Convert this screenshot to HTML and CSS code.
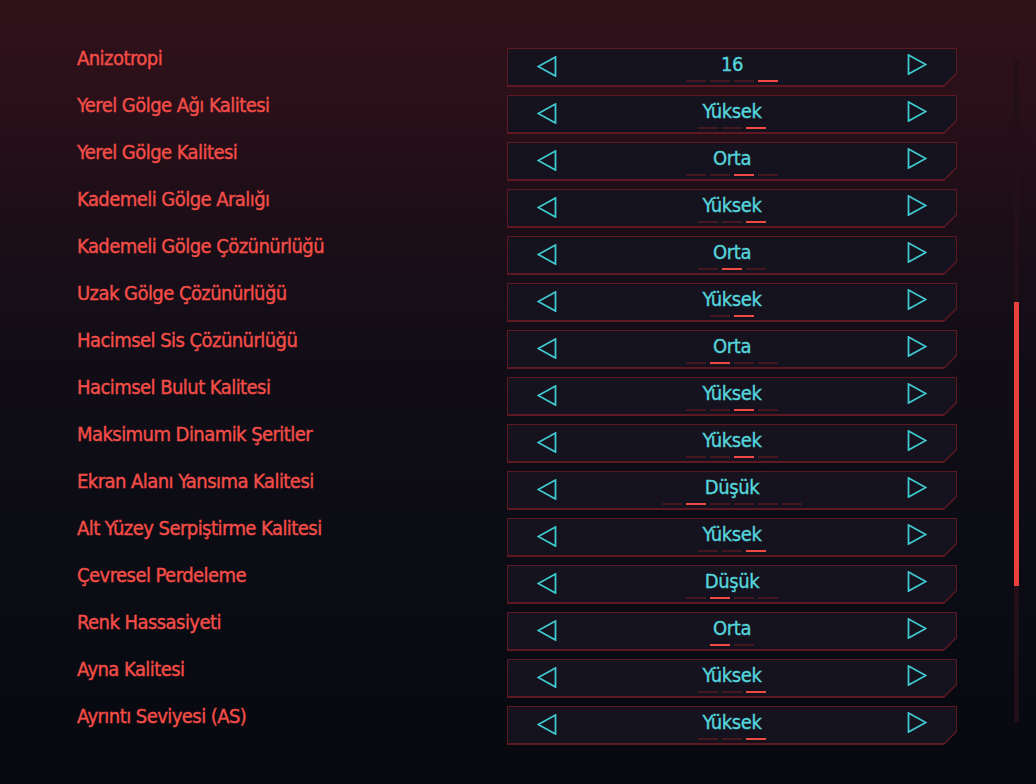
FILE: index.html
```html
<!DOCTYPE html>
<html lang="tr">
<head>
<meta charset="utf-8">
<title>Grafik Ayarları</title>
<link rel="stylesheet" href="styles.css">
</head>
<body>
<div class="page">
  <div class="list">
    <div class="row"><div class="label">Anizotropi</div><div class="sel"><div class="sel-in"><svg class="arr" viewBox="0 0 20 21"><polygon points="18.5,1 1.2,10.5 18.5,20"/></svg><div class="val"><span class="txt">16</span><div class="dots"><i></i><i></i><i></i><i class="on"></i></div></div><svg class="arr arr-r" viewBox="0 0 20 21"><polygon points="1.5,1 18.8,10.5 1.5,20"/></svg></div></div></div>
    <div class="row"><div class="label">Yerel Gölge Ağı Kalitesi</div><div class="sel"><div class="sel-in"><svg class="arr" viewBox="0 0 20 21"><polygon points="18.5,1 1.2,10.5 18.5,20"/></svg><div class="val"><span class="txt">Yüksek</span><div class="dots"><i></i><i></i><i class="on"></i></div></div><svg class="arr arr-r" viewBox="0 0 20 21"><polygon points="1.5,1 18.8,10.5 1.5,20"/></svg></div></div></div>
    <div class="row"><div class="label">Yerel Gölge Kalitesi</div><div class="sel"><div class="sel-in"><svg class="arr" viewBox="0 0 20 21"><polygon points="18.5,1 1.2,10.5 18.5,20"/></svg><div class="val"><span class="txt">Orta</span><div class="dots"><i></i><i></i><i class="on"></i><i></i></div></div><svg class="arr arr-r" viewBox="0 0 20 21"><polygon points="1.5,1 18.8,10.5 1.5,20"/></svg></div></div></div>
    <div class="row"><div class="label">Kademeli Gölge Aralığı</div><div class="sel"><div class="sel-in"><svg class="arr" viewBox="0 0 20 21"><polygon points="18.5,1 1.2,10.5 18.5,20"/></svg><div class="val"><span class="txt">Yüksek</span><div class="dots"><i></i><i></i><i class="on"></i></div></div><svg class="arr arr-r" viewBox="0 0 20 21"><polygon points="1.5,1 18.8,10.5 1.5,20"/></svg></div></div></div>
    <div class="row"><div class="label">Kademeli Gölge Çözünürlüğü</div><div class="sel"><div class="sel-in"><svg class="arr" viewBox="0 0 20 21"><polygon points="18.5,1 1.2,10.5 18.5,20"/></svg><div class="val"><span class="txt">Orta</span><div class="dots"><i></i><i class="on"></i><i></i></div></div><svg class="arr arr-r" viewBox="0 0 20 21"><polygon points="1.5,1 18.8,10.5 1.5,20"/></svg></div></div></div>
    <div class="row"><div class="label">Uzak Gölge Çözünürlüğü</div><div class="sel"><div class="sel-in"><svg class="arr" viewBox="0 0 20 21"><polygon points="18.5,1 1.2,10.5 18.5,20"/></svg><div class="val"><span class="txt">Yüksek</span><div class="dots"><i></i><i class="on"></i></div></div><svg class="arr arr-r" viewBox="0 0 20 21"><polygon points="1.5,1 18.8,10.5 1.5,20"/></svg></div></div></div>
    <div class="row"><div class="label">Hacimsel Sis Çözünürlüğü</div><div class="sel"><div class="sel-in"><svg class="arr" viewBox="0 0 20 21"><polygon points="18.5,1 1.2,10.5 18.5,20"/></svg><div class="val"><span class="txt">Orta</span><div class="dots"><i></i><i class="on"></i><i></i><i></i></div></div><svg class="arr arr-r" viewBox="0 0 20 21"><polygon points="1.5,1 18.8,10.5 1.5,20"/></svg></div></div></div>
    <div class="row"><div class="label">Hacimsel Bulut Kalitesi</div><div class="sel"><div class="sel-in"><svg class="arr" viewBox="0 0 20 21"><polygon points="18.5,1 1.2,10.5 18.5,20"/></svg><div class="val"><span class="txt">Yüksek</span><div class="dots"><i></i><i></i><i class="on"></i><i></i></div></div><svg class="arr arr-r" viewBox="0 0 20 21"><polygon points="1.5,1 18.8,10.5 1.5,20"/></svg></div></div></div>
    <div class="row"><div class="label">Maksimum Dinamik Şeritler</div><div class="sel"><div class="sel-in"><svg class="arr" viewBox="0 0 20 21"><polygon points="18.5,1 1.2,10.5 18.5,20"/></svg><div class="val"><span class="txt">Yüksek</span><div class="dots"><i></i><i></i><i class="on"></i><i></i></div></div><svg class="arr arr-r" viewBox="0 0 20 21"><polygon points="1.5,1 18.8,10.5 1.5,20"/></svg></div></div></div>
    <div class="row"><div class="label">Ekran Alanı Yansıma Kalitesi</div><div class="sel"><div class="sel-in"><svg class="arr" viewBox="0 0 20 21"><polygon points="18.5,1 1.2,10.5 18.5,20"/></svg><div class="val"><span class="txt">Düşük</span><div class="dots"><i></i><i class="on"></i><i></i><i></i><i></i><i></i></div></div><svg class="arr arr-r" viewBox="0 0 20 21"><polygon points="1.5,1 18.8,10.5 1.5,20"/></svg></div></div></div>
    <div class="row"><div class="label">Alt Yüzey Serpiştirme Kalitesi</div><div class="sel"><div class="sel-in"><svg class="arr" viewBox="0 0 20 21"><polygon points="18.5,1 1.2,10.5 18.5,20"/></svg><div class="val"><span class="txt">Yüksek</span><div class="dots"><i></i><i></i><i class="on"></i></div></div><svg class="arr arr-r" viewBox="0 0 20 21"><polygon points="1.5,1 18.8,10.5 1.5,20"/></svg></div></div></div>
    <div class="row"><div class="label">Çevresel Perdeleme</div><div class="sel"><div class="sel-in"><svg class="arr" viewBox="0 0 20 21"><polygon points="18.5,1 1.2,10.5 18.5,20"/></svg><div class="val"><span class="txt">Düşük</span><div class="dots"><i></i><i class="on"></i><i></i><i></i></div></div><svg class="arr arr-r" viewBox="0 0 20 21"><polygon points="1.5,1 18.8,10.5 1.5,20"/></svg></div></div></div>
    <div class="row"><div class="label">Renk Hassasiyeti</div><div class="sel"><div class="sel-in"><svg class="arr" viewBox="0 0 20 21"><polygon points="18.5,1 1.2,10.5 18.5,20"/></svg><div class="val"><span class="txt">Orta</span><div class="dots"><i class="on"></i><i></i></div></div><svg class="arr arr-r" viewBox="0 0 20 21"><polygon points="1.5,1 18.8,10.5 1.5,20"/></svg></div></div></div>
    <div class="row"><div class="label">Ayna Kalitesi</div><div class="sel"><div class="sel-in"><svg class="arr" viewBox="0 0 20 21"><polygon points="18.5,1 1.2,10.5 18.5,20"/></svg><div class="val"><span class="txt">Yüksek</span><div class="dots"><i></i><i></i><i class="on"></i></div></div><svg class="arr arr-r" viewBox="0 0 20 21"><polygon points="1.5,1 18.8,10.5 1.5,20"/></svg></div></div></div>
    <div class="row"><div class="label">Ayrıntı Seviyesi (AS)</div><div class="sel"><div class="sel-in"><svg class="arr" viewBox="0 0 20 21"><polygon points="18.5,1 1.2,10.5 18.5,20"/></svg><div class="val"><span class="txt">Yüksek</span><div class="dots"><i></i><i></i><i class="on"></i></div></div><svg class="arr arr-r" viewBox="0 0 20 21"><polygon points="1.5,1 18.8,10.5 1.5,20"/></svg></div></div></div>
  </div>
  <div class="track"><div class="thumb"></div></div>
</div>
</body>
</html>
```
FILE: styles.css
```css
html, body {
  margin: 0;
  padding: 0;
}
body {
  width: 1036px;
  height: 784px;
  overflow: hidden;
  background: linear-gradient(180deg, #30121a 0px, #2b1019 90px, #1d0e17 210px, #110d17 360px, #0b0c14 560px, #07090f 784px);
  font-family: "DejaVu Sans Condensed", "Liberation Sans Narrow", "Roboto Condensed", "DejaVu Sans", sans-serif;
  font-stretch: condensed;
}
.page {
  display: flex;
  height: 784px;
}
.list {
  display: flex;
  flex-direction: column;
  padding: 48px 0 0 77px;
}
.row {
  display: flex;
  align-items: flex-start;
  height: 47px;
}
.label {
  width: 430px;
  color: #f34d48;
  font-size: 20px;
  line-height: 21px;
  letter-spacing: -0.55px;
  -webkit-text-stroke: 0.4px #f34d48;
}
.sel {
  width: 450px;
  height: 39px;
  box-sizing: border-box;
  padding: 1px 1px 2px 1px;
  background: #5e1822;
  clip-path: polygon(0 0, 100% 0, 100% calc(100% - 13px), calc(100% - 13px) 100%, 0 100%);
}
.sel-in {
  height: 100%;
  display: flex;
  align-items: flex-start;
  justify-content: space-between;
  padding: 0 29px;
  background: linear-gradient(180deg, #16131f 0%, #14121e 100%);
  clip-path: polygon(0 0, 100% 0, 100% calc(100% - 12px), calc(100% - 12px) 100%, 0 100%);
}
.arr {
  width: 20px;
  height: 21px;
  margin-top: 7px;
  flex: none;
}
.arr polygon {
  fill: none;
  stroke: #3fc9cf;
  stroke-width: 1.8;
  stroke-linejoin: miter;
}
.arr-r {
  margin-top: 5px;
}
.val {
  display: flex;
  flex-direction: column;
  align-items: center;
  padding-top: 5px;
}
.txt {
  color: #55d5dc;
  font-size: 20px;
  line-height: 21px;
  letter-spacing: -0.4px;
  -webkit-text-stroke: 0.35px #55d5dc;
}
.dots {
  display: flex;
  gap: 4px;
  margin-top: 5px;
}
.dots i {
  display: block;
  width: 20px;
  height: 2px;
  background: #451820;
}
.dots i.on {
  background: #ef4a43;
}
.track {
  width: 5px;
  height: 662px;
  margin: 60px 0 0 57px;
  background: #220f18;
  display: flex;
  flex-direction: column;
}
.thumb {
  margin-top: 242px;
  height: 284px;
  background: #e8403d;
}
```
